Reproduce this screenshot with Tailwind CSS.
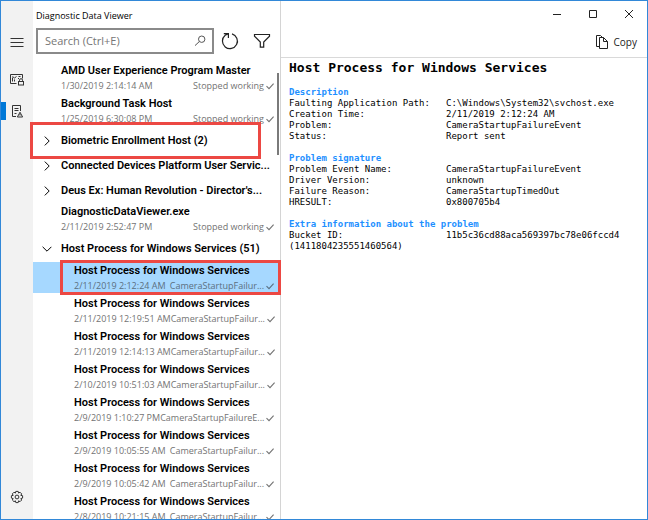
<!DOCTYPE html>
<html lang="en">
  <head>
    <meta charset="UTF-8" />
    <meta name="viewport" content="width=device-width, initial-scale=1.0" />
    <title>Diagnostic Data Viewer</title>

    <script src="https://cdn.jsdelivr.net/npm/@tailwindcss/browser@4"></script>
  </head>
  <body class="flex h-screen overflow-hidden border border-[#3288d8] bg-white font-['Open_Sans',sans-serif] text-black">
    <svg class="hidden">
      <symbol id="check" viewBox="0 0 8 8">
        <path d="M.5 4.2 3 6.6 7.6 1.6" fill="none" stroke="currentColor" stroke-width="1.1" />
      </symbol>
      <symbol id="chevron" viewBox="0 0 10 10">
        <path d="M2.8.6 7.2 5 2.8 9.4" fill="none" stroke="currentColor" />
      </symbol>
    </svg>

    <!-- Navigation rail -->
    <nav class="flex w-8 shrink-0 flex-col items-center bg-[#f2f2f2] pt-[25px] pb-1.5 text-[#333]">
      <button class="mb-[5px] flex h-8 w-full items-center justify-center" aria-label="Menu">
        <svg class="h-3 w-3.5" viewBox="0 0 14 12" stroke="currentColor"><path d="M.5 2.5h13M.5 6.5h13M.5 10.5h13" /></svg>
      </button>
      <button class="flex h-8 w-full items-center justify-center" aria-label="Diagnostic data">
        <svg class="h-3.5 w-3.5" viewBox="0 0 14 14" fill="none" stroke="currentColor">
          <path d="M6.5 11.5h-6v-9h12v4M2.5 9.5v-4M4.5 9.5v-2M2.5 4.5l2 1.5 2-1.5M8.5 4.5h2M8 6.5h1" />
          <rect x="8.5" y="9.5" width="5" height="3.5" />
          <path d="M9.5 9.5V8.2a1.5 1.5 0 0 1 3 0v1.3" />
        </svg>
      </button>
      <button class="relative flex h-8 w-full items-center justify-center" aria-label="Problem reports">
        <span class="absolute left-0 h-[18px] w-[5px] bg-[#0078d7]"></span>
        <svg class="h-3.5 w-3.5" viewBox="0 0 14 14" fill="none" stroke="currentColor">
          <path d="M6 12.5H2.5v-11h8V7M4.5 4.5h4M4.5 6.5h4M4.5 9.5h2" />
          <path d="M10 8.2 7.4 13h5.2z" />
          <path d="M10 10v1.5" />
        </svg>
      </button>
      <button class="mt-auto flex h-8 w-full items-center justify-center" aria-label="Settings">
        <svg class="h-3.5 w-3.5" viewBox="0 0 14 14" fill="none" stroke="currentColor">
          <path d="M5.8 1.4h2.4l.4 1.7 1.4-.9 1.7 1.7-.9 1.5 1.8.3v2.4l-1.8.5.9 1.4-1.7 1.7-1.4-.9-.4 1.8H5.8l-.4-1.8-1.4.9-1.7-1.7.9-1.4-1.8-.5V5.7l1.8-.3-.9-1.5L4 2.2l1.4.9z" />
          <circle cx="7" cy="7" r="1.9" />
        </svg>
      </button>
    </nav>

    <!-- Problem list -->
    <aside class="relative w-[248px] shrink-0 border-r border-[#d4d4d4]">
      <h1 class="pt-2 pl-[3px] text-[9px] leading-[14px]">Diagnostic Data Viewer</h1>
      <div class="flex items-center pt-[5px] pl-[3px]">
        <label class="flex h-[26px] w-[178px] items-center border-2 border-[#8a8a8a] pr-1.5 pl-[7px]">
          <input type="text" placeholder="Search (Ctrl+E)" aria-label="Search" class="min-w-0 flex-1 text-[11px] outline-none placeholder:text-[#757575]" />
          <svg class="h-3 w-3" viewBox="0 0 12 12" fill="none" stroke="#555"><circle cx="7.7" cy="4.2" r="3.2" /><path d="M5.4 6.5 1 10.6" /></svg>
        </label>
        <button class="ml-[7px]" aria-label="Refresh">
          <svg class="h-[18px] w-[18px]" viewBox="0 0 18 18" fill="none" stroke="#222" stroke-width="1.2">
            <path d="M11 1.9A7.5 7.5 0 1 1 4.2 3.3L6.8 1.9M2.8 1.6h4.6v4.4" />
          </svg>
        </button>
        <button class="ml-3.5" aria-label="Filter">
          <svg class="h-[18px] w-[18px]" viewBox="0 0 18 18" fill="none" stroke="#222" stroke-width="1.2">
            <path d="M1.5 2.5h15v1.7l-5.8 5.9v5H7.3v-5L1.5 4.2z" />
          </svg>
        </button>
      </div>

      <ul class="pt-2 text-[11px] leading-4">
        <li class="mb-0.5 h-[31px] pt-px pr-1.5 pl-7">
          <button class="block w-full text-left">
            <span class="block h-4 font-['Roboto',sans-serif] font-semibold whitespace-nowrap">AMD User Experience Program Master</span>
            <span class="flex h-3.5 items-center text-[9px] leading-[14px] whitespace-nowrap text-[#737373]">1/30/2019 2:14:14 AM<span class="ml-auto">Stopped working</span><svg class="ml-0.5 h-2 w-2 shrink-0"><use href="#check" /></svg></span>
          </button>
        </li>
        <li class="mb-0.5 h-[31px] pt-px pr-1.5 pl-7">
          <button class="block w-full text-left">
            <span class="block h-4 font-['Roboto',sans-serif] font-semibold whitespace-nowrap">Background Task Host</span>
            <span class="flex h-3.5 items-center text-[9px] leading-[14px] whitespace-nowrap text-[#737373]">1/25/2019 6:30:08 PM<span class="ml-auto">Stopped working</span><svg class="ml-0.5 h-2 w-2 shrink-0"><use href="#check" /></svg></span>
          </button>
        </li>
        <li class="relative h-[25px]">
          <button class="flex h-full w-full items-center pl-[9px] font-['Roboto',sans-serif] font-semibold whitespace-nowrap" aria-expanded="false">
            <svg class="mr-[9px] h-2.5 w-2.5 shrink-0"><use href="#chevron" /></svg>Biometric Enrollment Host (2)
          </button>
          <!-- highlight -->
          <span class="pointer-events-none absolute -top-1.5 -left-[3px] h-[37px] w-[231px] border-3 border-[#ec4843]"></span>
        </li>
        <li class="h-[25px]">
          <button class="flex h-full w-full items-center pl-[9px] font-['Roboto',sans-serif] font-semibold whitespace-nowrap" aria-expanded="false">
            <svg class="mr-[9px] h-2.5 w-2.5 shrink-0"><use href="#chevron" /></svg>Connected Devices Platform User Servic...
          </button>
        </li>
        <li class="h-[25px]">
          <button class="flex h-full w-full items-center pl-[9px] font-['Roboto',sans-serif] font-semibold whitespace-nowrap" aria-expanded="false">
            <svg class="mr-[9px] h-2.5 w-2.5 shrink-0"><use href="#chevron" /></svg>Deus Ex: Human Revolution - Director's...
          </button>
        </li>
        <li class="mb-0.5 h-[31px] pt-px pr-1.5 pl-7">
          <button class="block w-full text-left">
            <span class="block h-4 font-['Roboto',sans-serif] font-semibold whitespace-nowrap">DiagnosticDataViewer.exe</span>
            <span class="flex h-3.5 items-center text-[9px] leading-[14px] whitespace-nowrap text-[#737373]">2/11/2019 2:52:47 PM<span class="ml-auto">Stopped working</span><svg class="ml-0.5 h-2 w-2 shrink-0"><use href="#check" /></svg></span>
          </button>
        </li>
        <li>
          <button class="flex h-[25px] w-full items-center pl-[9px] font-['Roboto',sans-serif] font-semibold whitespace-nowrap" aria-expanded="true">
            <svg class="mr-[9px] h-2.5 w-2.5 shrink-0 rotate-90"><use href="#chevron" /></svg>Host Process for Windows Services (51)
          </button>
          <ul class="pt-px">
            <li class="relative mb-0.5 h-[31px] bg-[#a6d8ff] pt-px pr-1.5 pl-[41px]">
              <button class="block w-full text-left">
                <span class="block h-4 font-['Roboto',sans-serif] font-semibold whitespace-nowrap">Host Process for Windows Services</span>
                <span class="flex h-3.5 items-center text-[9px] leading-[14px] whitespace-nowrap text-[#5b6f80]">2/11/2019 2:12:24 AM<span class="ml-auto">CameraStartupFailur...</span><svg class="ml-0.5 h-2 w-2 shrink-0"><use href="#check" /></svg></span>
              </button>
              <!-- highlight -->
              <span class="pointer-events-none absolute -top-0.5 -right-px bottom-[-2px] left-[27px] border-3 border-[#ec4843]"></span>
            </li>
            <li class="mb-0.5 h-[31px] pt-px pr-1.5 pl-[41px]">
              <button class="block w-full text-left">
                <span class="block h-4 font-['Roboto',sans-serif] font-semibold whitespace-nowrap">Host Process for Windows Services</span>
                <span class="flex h-3.5 items-center text-[9px] leading-[14px] whitespace-nowrap text-[#737373]">2/11/2019 12:19:51 AM<span class="ml-auto">CameraStartupFailur...</span><svg class="ml-0.5 h-2 w-2 shrink-0"><use href="#check" /></svg></span>
              </button>
            </li>
            <li class="mb-0.5 h-[31px] pt-px pr-1.5 pl-[41px]">
              <button class="block w-full text-left">
                <span class="block h-4 font-['Roboto',sans-serif] font-semibold whitespace-nowrap">Host Process for Windows Services</span>
                <span class="flex h-3.5 items-center text-[9px] leading-[14px] whitespace-nowrap text-[#737373]">2/11/2019 12:14:13 AM<span class="ml-auto">CameraStartupFailur...</span><svg class="ml-0.5 h-2 w-2 shrink-0"><use href="#check" /></svg></span>
              </button>
            </li>
            <li class="mb-0.5 h-[31px] pt-px pr-1.5 pl-[41px]">
              <button class="block w-full text-left">
                <span class="block h-4 font-['Roboto',sans-serif] font-semibold whitespace-nowrap">Host Process for Windows Services</span>
                <span class="flex h-3.5 items-center text-[9px] leading-[14px] whitespace-nowrap text-[#737373]">2/10/2019 10:51:03 AM<span class="ml-auto">CameraStartupFailur...</span><svg class="ml-0.5 h-2 w-2 shrink-0"><use href="#check" /></svg></span>
              </button>
            </li>
            <li class="mb-0.5 h-[31px] pt-px pr-1.5 pl-[41px]">
              <button class="block w-full text-left">
                <span class="block h-4 font-['Roboto',sans-serif] font-semibold whitespace-nowrap">Host Process for Windows Services</span>
                <span class="flex h-3.5 items-center text-[9px] leading-[14px] whitespace-nowrap text-[#737373]">2/9/2019 1:10:27 PM<span class="ml-auto">CameraStartupFailureE...</span><svg class="ml-0.5 h-2 w-2 shrink-0"><use href="#check" /></svg></span>
              </button>
            </li>
            <li class="mb-0.5 h-[31px] pt-px pr-1.5 pl-[41px]">
              <button class="block w-full text-left">
                <span class="block h-4 font-['Roboto',sans-serif] font-semibold whitespace-nowrap">Host Process for Windows Services</span>
                <span class="flex h-3.5 items-center text-[9px] leading-[14px] whitespace-nowrap text-[#737373]">2/9/2019 10:05:55 AM<span class="ml-auto">CameraStartupFailur...</span><svg class="ml-0.5 h-2 w-2 shrink-0"><use href="#check" /></svg></span>
              </button>
            </li>
            <li class="mb-0.5 h-[31px] pt-px pr-1.5 pl-[41px]">
              <button class="block w-full text-left">
                <span class="block h-4 font-['Roboto',sans-serif] font-semibold whitespace-nowrap">Host Process for Windows Services</span>
                <span class="flex h-3.5 items-center text-[9px] leading-[14px] whitespace-nowrap text-[#737373]">2/9/2019 10:05:42 AM<span class="ml-auto">CameraStartupFailur...</span><svg class="ml-0.5 h-2 w-2 shrink-0"><use href="#check" /></svg></span>
              </button>
            </li>
            <li class="mb-0.5 h-[31px] pt-px pr-1.5 pl-[41px]">
              <button class="block w-full text-left">
                <span class="block h-4 font-['Roboto',sans-serif] font-semibold whitespace-nowrap">Host Process for Windows Services</span>
                <span class="flex h-3.5 items-center text-[9px] leading-[14px] whitespace-nowrap text-[#737373]">2/8/2019 10:21:15 AM<span class="ml-auto">CameraStartupFailur...</span><svg class="ml-0.5 h-2 w-2 shrink-0"><use href="#check" /></svg></span>
              </button>
            </li>
          </ul>
        </li>
      </ul>
      <!-- scrollbar thumb -->
      <span class="absolute top-[72px] right-px h-[82px] w-0.5 bg-[#7a7a7a]"></span>
    </aside>

    <!-- Details -->
    <main class="min-w-0 flex-1">
      <header class="h-[57px] border-b border-[#d9d9d9] text-[#222]">
        <div class="flex h-[25px] items-center justify-end">
          <button class="flex h-full w-9 items-center justify-center" aria-label="Minimize">
            <svg class="h-2.5 w-2.5" viewBox="0 0 10 10" fill="none" stroke="currentColor"><path d="M1 5.5h8" /></svg>
          </button>
          <button class="flex h-full w-9 items-center justify-center" aria-label="Maximize">
            <svg class="h-2.5 w-2.5" viewBox="0 0 10 10" fill="none" stroke="currentColor"><path d="M1.5 1.5h7v7h-7z" /></svg>
          </button>
          <button class="flex h-full w-9 items-center justify-center" aria-label="Close">
            <svg class="h-2.5 w-2.5" viewBox="0 0 10 10" fill="none" stroke="currentColor"><path d="m1 1 8 8M9 1 1 9" /></svg>
          </button>
        </div>
        <button class="mr-2.5 ml-auto flex h-8 items-center gap-1.5 text-[10px]">
          <svg class="h-3.5 w-3" viewBox="0 0 12 14" fill="none" stroke="currentColor">
            <path d="M3.5 11.5h-3v-11h4l2 2" />
            <path d="M3.5 2.5h4l4 4v7h-8zM7.5 2.5v4h4" />
          </svg>
          Copy
        </button>
      </header>

      <article class="pl-2 font-['DejaVu_Sans_Mono',monospace] text-[9px] leading-[11px]">
        <h2 class="pt-0.5 text-[13px] leading-4 font-bold whitespace-nowrap">Host Process for Windows Services</h2>

        <h3 class="mt-[11px] font-bold text-[#1e90ff]">Description</h3>
        <dl class="grid grid-cols-[157px_1fr]">
          <dt>Faulting Application Path:</dt>
          <dd>C:\Windows\System32\svchost.exe</dd>
          <dt>Creation Time:</dt>
          <dd>2/11/2019 2:12:24 AM</dd>
          <dt>Problem:</dt>
          <dd>CameraStartupFailureEvent</dd>
          <dt>Status:</dt>
          <dd>Report sent</dd>
        </dl>

        <h3 class="mt-[11px] font-bold text-[#1e90ff]">Problem signature</h3>
        <dl class="grid grid-cols-[157px_1fr]">
          <dt>Problem Event Name:</dt>
          <dd>CameraStartupFailureEvent</dd>
          <dt>Driver Version:</dt>
          <dd>unknown</dd>
          <dt>Failure Reason:</dt>
          <dd>CameraStartupTimedOut</dd>
          <dt>HRESULT:</dt>
          <dd>0x800705b4</dd>
        </dl>

        <h3 class="mt-[11px] font-bold text-[#1e90ff]">Extra information about the problem</h3>
        <dl class="grid grid-cols-[157px_1fr]">
          <dt>Bucket ID:</dt>
          <dd>11b5c36cd88aca569397bc78e06fccd4</dd>
          <dd class="col-span-2">(1411804235551460564)</dd>
        </dl>
      </article>
    </main>
  </body>
</html>
